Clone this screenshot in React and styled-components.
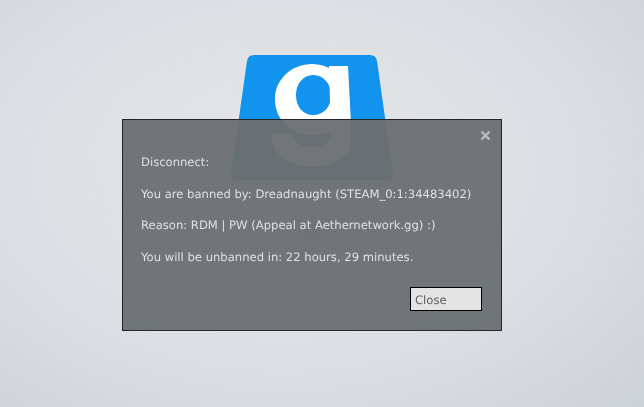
import React from "react";
import styled, { createGlobalStyle } from "styled-components";

const Global = createGlobalStyle`
  html, body {
    margin: 0;
    padding: 0;
    height: 100%;
  }
  #root {
    height: 100%;
  }
`;

const Page = styled.div`
  position: relative;
  width: 644px;
  height: 407px;
  overflow: hidden;
  padding-top: 54px;
  box-sizing: border-box;
  background: radial-gradient(ellipse 500px 340px at 44% 42%, #e5e6e8 0%, #dcdfe3 55%, #cdd1d8 100%);
  font-family: "DejaVu Sans", sans-serif;
`;

const LogoMark = styled.svg`
  display: block;
  width: 170px;
  height: 200px;
  margin-left: 227px;
`;

const Dialog = styled.div`
  position: absolute;
  left: 122px;
  top: 119px;
  width: 380px;
  height: 212px;
  box-sizing: border-box;
  padding: 35px 18px 0;
  border: 1px solid #25272a;
  background: rgba(106, 110, 112, 0.945);
  backdrop-filter: grayscale(0.5);
  color: #dfe0e0;
  display: flex;
  flex-direction: column;
`;

const CloseX = styled.svg`
  position: absolute;
  top: 10px;
  right: 10px;
  width: 11px;
  height: 11px;
`;

const Line = styled.p`
  margin: 0 0 17.7px;
  font-size: 11.6px;
  line-height: 14px;
  white-space: nowrap;
  text-rendering: geometricPrecision;
`;

const Footer = styled.div`
  margin-top: auto;
  margin-bottom: 19px;
  margin-right: 1px;
  display: flex;
  justify-content: flex-end;
`;

const CloseButton = styled.button`
  width: 72px;
  height: 24px;
  box-sizing: border-box;
  padding: 2px 0 0 4px;
  border: 1px solid #000;
  border-radius: 0;
  background: #e4e4e4;
  color: #5c5c5c;
  font: 11.6px "DejaVu Sans", sans-serif;
  text-rendering: geometricPrecision;
  text-align: left;
`;

export default function App() {
  return (
    <Page>
      <Global />
      <LogoMark viewBox="0 0 170 200">
        <path d="M27 1H143Q149 1 150 7L166 120Q167 126 161 126H9Q3 126 4 120L20 7Q21 1 27 1Z" fill="#1294ee" />
        <path
          d="M85 10C105 10 122 25 122 45C122 67 105 81 85 81C65 81 48 67 48 45C48 25 65 10 85 10ZM86 21C76 21 69 30 69 41C69 53 76 61 86 61C97 61 104 53 104 41C104 30 97 21 86 21Z"
          fill="#fff"
          fillRule="evenodd"
        />
        <path
          d="M102 12L121 12L124 70V88C124 104 106 112 85 112C62 112 46 102 44 80L65 80C66 89 75 93 85 93C97 93 104 89 104 82Z"
          fill="#fff"
        />
        <path d="M85 163L101 177L85 193L69 177Z" fill="#f0a030" opacity="0.6" />
      </LogoMark>
      <Dialog>
        <CloseX viewBox="0 0 11 11">
          <path d="M1.5 1.5L9.5 9.5M9.5 1.5L1.5 9.5" stroke="#bcbcbc" strokeWidth="2.4" />
        </CloseX>
        <Line>Disconnect:</Line>
        <Line>You are banned by: Dreadnaught (STEAM_0:1:34483402)</Line>
        <Line>Reason: RDM | PW (Appeal at Aethernetwork.gg) :)</Line>
        <Line>You will be unbanned in: 22 hours, 29 minutes.</Line>
        <Footer>
          <CloseButton>Close</CloseButton>
        </Footer>
      </Dialog>
    </Page>
  );
}
